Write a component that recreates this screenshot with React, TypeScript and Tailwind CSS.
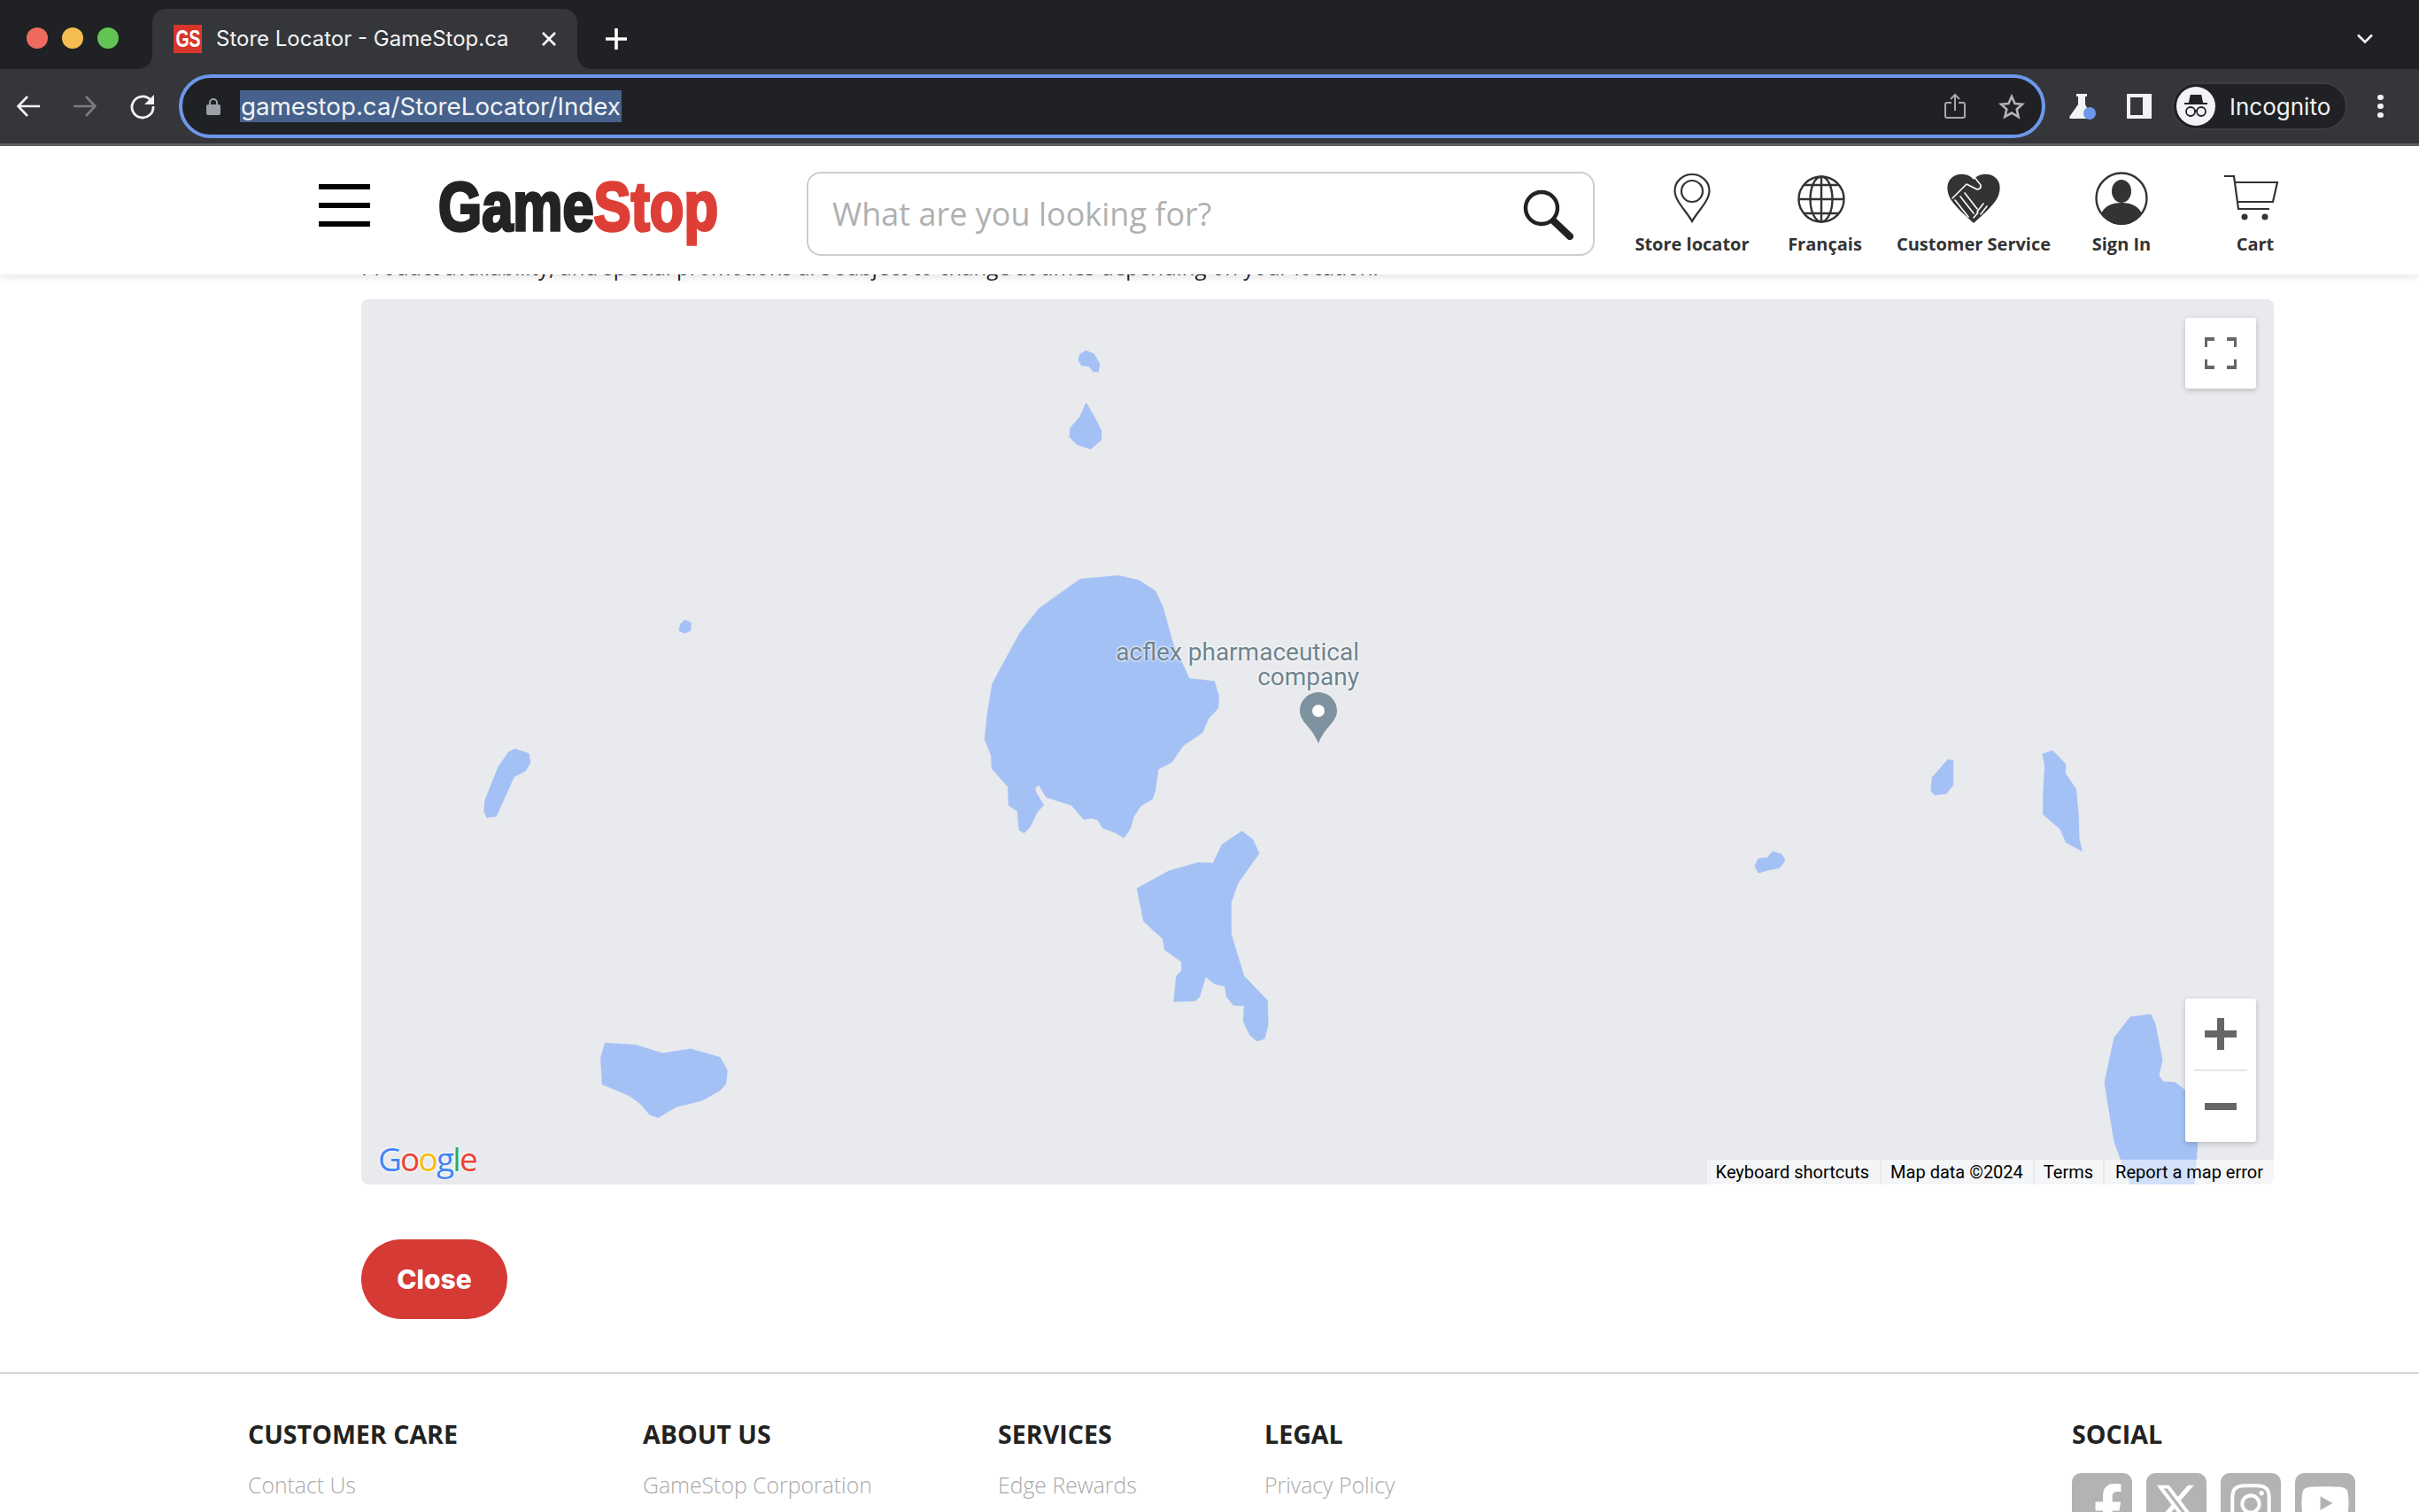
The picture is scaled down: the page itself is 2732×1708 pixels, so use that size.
import { FaFacebookF, FaInstagram, FaYoutube } from "react-icons/fa";
import { FaXTwitter } from "react-icons/fa6";

const WATER = "#a4c1f5";

// lake outlines, traced from the map, in px of the crop they were measured on
const lakeBig =
  "660,86 790,76 860,90 915,120 940,165 975,270 1030,370 1115,378 1130,420 1128,455 1095,485 1075,525 1010,562 970,610 925,630 915,690 905,715 865,735 842,765 830,800 808,826 780,812 735,797 720,775 700,770 672,773 630,733 545,710 520,675 508,682 510,695 537,732 515,752 490,795 470,812 452,803 447,750 417,733 415,680 360,628 358,590 336,545 345,470 362,385 455,240 520,170";
const lakeSouth =
  "852,970 960,920 1060,896 1110,898 1140,845 1208,806 1245,830 1267,870 1195,955 1172,1010 1172,1100 1215,1220 1295,1290 1297,1360 1285,1400 1260,1407 1235,1390 1212,1350 1215,1305 1180,1305 1155,1280 1150,1250 1115,1243 1085,1223 1065,1280 1050,1292 977,1294 985,1220 1003,1205 1003,1180 945,1145 940,1115 875,1065";
const lakeBottomLeft =
  "460,1297 565,1303 655,1328 750,1315 850,1340 875,1380 870,1420 850,1440 790,1470 700,1490 640,1522 610,1512 580,1480 540,1455 450,1422 445,1340";
const lakeLeft = "135,425 155,417 200,430 205,455 190,478 150,497 90,615 60,618 52,600 55,570 100,470";
const lakeDot = "730,27 752,35 750,60 730,68 710,60 715,40";
const lakeTop = "140,50 165,60 185,95 180,118 165,118 150,100 125,97 115,80 120,62";
const lakeDrop = "140,228 170,280 190,320 190,350 155,380 110,365 85,340 88,310 120,275";
const lakeMid = "690,68 708,72 708,155 685,185 645,190 632,175 636,130";
const lakeRight = "1010,50 1045,38 1090,85 1088,115 1125,170 1133,260 1135,335 1145,380 1090,350 1070,305 1012,255 1012,190 1018,90";
const lakeSmall = "2002,962 2012,965 2016,972 2010,980 1996,983 1986,986 1982,978 1986,970 1996,969";
const lakeCorner =
  "2429,1146 2434,1157 2442,1197 2438,1215 2443,1222 2457,1223 2468,1232 2482,1290 2478,1338 2406,1338 2388,1290 2377,1223 2388,1172 2406,1149";

function MapLakes() {
  return (
    <svg className="absolute inset-0" width="2160" height="1000" viewBox="408 338 2160 1000">
      <g fill={WATER} stroke={WATER} strokeLinejoin="round">
        <polygon points={lakeBig} transform="translate(1000 620) scale(0.3333 0.3954)" />
        <polygon points={lakeSouth} transform="translate(1000 620) scale(0.3333 0.3954)" />
        <polygon points={lakeBottomLeft} transform="translate(530 690) scale(0.3333 0.3763)" />
        <polygon points={lakeLeft} transform="translate(530 690) scale(0.3333 0.3763)" strokeWidth="6" />
        <polygon points={lakeDot} transform="translate(530 690) scale(0.3333 0.3763)" />
        <polygon points={lakeTop} transform="translate(1180 380) scale(0.3333)" strokeWidth="5" />
        <polygon points={lakeDrop} transform="translate(1180 380) scale(0.3333)" strokeWidth="5" />
        <polygon points={lakeMid} transform="translate(1970 835) scale(0.3333)" />
        <polygon points={lakeRight} transform="translate(1970 835) scale(0.3333)" />
        <polygon points={lakeSmall} />
        <polygon points={lakeCorner} />
      </g>
      {/* place pin */}
      <path d="M1489 782c-11.600 0-21 9.400-21 21 0 13 14 18 21 37 7-19 21-24 21-37 0-11.600-9.400-21-21-21z" fill="#7e929f" />
      <circle cx="1489" cy="803" r="7" fill="#fff" />
    </svg>
  );
}

function Flare({ side }: { side: "left" | "right" }) {
  return (
    <span className={side === "left" ? "absolute bottom-0 -left-4 h-4 w-4 bg-[#35363a]" : "absolute bottom-0 -right-4 h-4 w-4 bg-[#35363a]"}>
      <span className={side === "left" ? "block h-4 w-4 rounded-br-[16px] bg-[#202124]" : "block h-4 w-4 rounded-bl-[16px] bg-[#202124]"} />
    </span>
  );
}

function BrowserChrome() {
  return (
    <div className="font-['Inter',sans-serif]">
      <div className="flex h-[78px] items-end bg-[#202124] pl-[30px]">
        <div className="flex h-[68px] items-center gap-[16px] self-end pb-[2px]">
          <span className="h-[24px] w-[24px] rounded-full bg-[#ee6a5f]" />
          <span className="h-[24px] w-[24px] rounded-full bg-[#f5bd4f]" />
          <span className="h-[24px] w-[24px] rounded-full bg-[#61c454]" />
        </div>
        <div className="relative ml-[38px] flex h-[68px] w-[480px] items-center rounded-t-[16px] bg-[#35363a] pl-[24px]">
          <Flare side="left" />
          <Flare side="right" />
          <span className="flex h-[32px] w-[32px] items-center justify-center overflow-hidden bg-[#d9362b] font-['Liberation_Sans',sans-serif] text-[27px] leading-none font-bold text-white">
            <span className="scale-x-[0.72]">GS</span>
          </span>
          <span className="ml-[16px] text-[24px] whitespace-nowrap text-[#f1f3f4]">Store Locator - GameStop.ca</span>
          <svg className="absolute left-[439px] top-[25px]" width="18" height="18" viewBox="0 0 18 18" stroke="#fff" strokeWidth="2.600">
            <path d="M2 2l14 14M16 2L2 16" />
          </svg>
        </div>
        <svg className="mb-[21px] ml-[31px]" width="26" height="26" viewBox="0 0 26 26" stroke="#fff" strokeWidth="3.600">
          <path d="M13 1v24M1 13h24" />
        </svg>
        <svg className="mb-[28px] ml-[1952px]" width="20" height="12" viewBox="0 0 20 12" fill="none" stroke="#f1f3f4" strokeWidth="2.600">
          <path d="M2 1.500l8 8 8-8" />
        </svg>
      </div>
      <div className="flex h-[87px] items-center border-b-[3px] border-[#5f6064] bg-[#35363a]">
        <svg className="ml-[18px]" width="28" height="26" viewBox="0 0 28 26" fill="none" stroke="#f1f3f4" strokeWidth="2.600">
          <path d="M27 13H3M13 2L2.500 13 13 24" />
        </svg>
        <svg className="ml-[36px]" width="28" height="26" viewBox="0 0 28 26" fill="none" stroke="#7c7d80" strokeWidth="2.600">
          <path d="M1 13h24M15 2l10.500 11L15 24" />
        </svg>
        <svg className="ml-[36px]" width="30" height="30" viewBox="0 0 30 30" fill="none">
          <path d="M24 8A12 12 0 1 0 27 15" stroke="#f1f3f4" strokeWidth="2.800" />
          <path d="M28 2v11H17z" fill="#f1f3f4" />
        </svg>
        <div className="ml-[26px] flex h-[72px] w-[2108px] items-center rounded-[36px] border-[4px] border-[#6d97eb] bg-[#202124] pr-[19px]">
          <svg className="ml-[27px]" width="16" height="20" viewBox="0 0 16 20">
            <path d="M4 9V6a4 4 0 0 1 8 0v3" fill="none" stroke="#9aa0a6" strokeWidth="2" />
            <rect x="0" y="8" width="16" height="12" rx="2" fill="#9aa0a6" />
          </svg>
          <span className="ml-[22px] bg-[#46628c] px-px text-[27.700px] leading-[36px] whitespace-nowrap text-[#f1f3f4]">
            gamestop.ca/StoreLocator/Index
          </span>
          <svg className="ml-auto" width="24" height="30" viewBox="0 0 24 30" fill="none" stroke="#a6a8ab" strokeWidth="2">
            <path d="M8 11H3a2 2 0 0 0-2 2v13a2 2 0 0 0 2 2h18a2 2 0 0 0 2-2V13a2 2 0 0 0-2-2h-5M12 20V2M7 7l5-5 5 5" />
          </svg>
          <svg className="ml-[37px]" width="30" height="29" viewBox="0 0 30 29" fill="none" stroke="#b4b6b8" strokeWidth="2.600">
            <path d="M15 3l3.600 8 8.400.8-6.300 5.700 1.900 8.500L15 21.500 7.400 25.900l1.900-8.500L3 11.800l8.400-.8z" />
          </svg>
        </div>
        <svg className="ml-[27px]" width="30" height="30" viewBox="0 0 30 30">
          <path d="M8 1h12v3h-2v9l5 9a5 5 0 0 0-3 7H2c-2 0-2-1.500-1.500-2.500L10 13V4H8z" fill="#f1f3f4" />
          <circle cx="23" cy="23" r="7" fill="#6d97eb" />
        </svg>
        <svg className="ml-[35px]" width="28" height="28" viewBox="0 0 28 28">
          <path d="M0 0h28v28H0zM4 4v20h14V4z" fill="#f1f3f4" fillRule="evenodd" />
        </svg>
        <div className="ml-[23px] flex h-[54px] w-[198px] items-center rounded-[27px] border-[2px] border-[#3c3d41] bg-[#202124] pl-[3px]">
          <span className="flex h-[44px] w-[44px] items-center justify-center rounded-full bg-[#f1f3f4]">
            <svg width="30" height="30" viewBox="0 0 30 30" fill="none" stroke="#202124" strokeWidth="1.800">
              <path d="M8 10l1.500-7h11L22 10z" fill="#202124" />
              <path d="M2 12h26" strokeWidth="2" />
              <circle cx="9" cy="21" r="5" />
              <circle cx="21" cy="21" r="5" />
              <path d="M14 20h2" />
            </svg>
          </span>
          <span className="ml-[16px] text-[26px] whitespace-nowrap text-[#f1f3f4]">Incognito</span>
        </div>
        <div className="ml-[34px] flex flex-col gap-[3.500px]">
          <span className="h-[6.500px] w-[6.500px] rounded-full bg-[#f1f3f4]" />
          <span className="h-[6.500px] w-[6.500px] rounded-full bg-[#f1f3f4]" />
          <span className="h-[6.500px] w-[6.500px] rounded-full bg-[#f1f3f4]" />
        </div>
      </div>
    </div>
  );
}

function Logo() {
  return (
    <div className="ml-[77px] h-[67px] w-[318px] shrink-0 overflow-visible font-['Liberation_Sans',sans-serif] text-[78px] leading-[67px] font-bold whitespace-nowrap [-webkit-text-stroke:3.500px_currentColor]">
      <div className="w-fit origin-left scale-x-[0.81]">
        <span className="text-[#222423]">Game</span>
        <span className="text-[#dd3f36]">Stop</span>
      </div>
    </div>
  );
}

function NavItem({ label, width, icon }: { label: string; width: string; icon: React.ReactNode }) {
  return (
    <div className={`flex shrink-0 flex-col items-center ${width}`}>
      <div className="flex h-[60px] items-center justify-center">{icon}</div>
      <span className="mt-[7px] text-[20px] leading-[30px] font-bold whitespace-nowrap text-[#333]">{label}</span>
    </div>
  );
}

function Header() {
  return (
    <header className="relative z-10 flex h-[145px] items-start bg-white pl-[360px] font-['Open_Sans',sans-serif] shadow-[0_3px_10px_rgba(0,0,0,0.1)]">
      <div className="mt-[43px] flex w-[58px] shrink-0 flex-col gap-[15px]">
        <span className="h-[6px] bg-black" />
        <span className="h-[6px] bg-black" />
        <span className="h-[6px] bg-black" />
      </div>
      <div className="mt-[35px]">
        <Logo />
      </div>
      <div className="ml-[98px] mt-[29px] flex h-[95px] w-[890px] shrink-0 items-center justify-between rounded-[16px] border-[2.500px] border-[#cdcdcd] pl-[27px] pr-[22px]">
        <span className="text-[36px] text-[#b0b0b0]">What are you looking for?</span>
        <svg width="58" height="58" viewBox="0 0 58 58" fill="none" stroke="#222" strokeLinecap="round">
          <circle cx="22" cy="22" r="18" strokeWidth="4.500" />
          <path d="M36 37l18 17" strokeWidth="8" />
        </svg>
      </div>
      <nav className="ml-[35px] mt-[29px] flex">
        <NavItem
          label="Store locator"
          width="w-[150px]"
          icon={
            <svg width="42" height="56" viewBox="0 0 42 56" fill="none" stroke="#333" strokeWidth="2.200">
              <path d="M21 54C15 43 1.500 31 1.500 19.500a19.500 18.500 0 0 1 39 0C40.500 31 27 43 21 54z" />
              <circle cx="21" cy="20" r="12" />
            </svg>
          }
        />
        <NavItem
          label="Français"
          width="w-[150px]"
          icon={
            <svg className="mr-[8px] mt-[2px]" width="54" height="56" viewBox="0 0 54 56" fill="none" stroke="#333" strokeWidth="2.400">
              <circle cx="27" cy="28" r="25.500" />
              <ellipse cx="27" cy="28" rx="12.500" ry="25.500" />
              <path d="M27 2v52M2 28h50M8 12h38M8 44h38" />
            </svg>
          }
        />
        <NavItem
          label="Customer Service"
          width="w-[186px]"
          icon={
            <svg width="60" height="56" viewBox="0 0 60 56">
              <path d="M30 7C24-1 10-1 4 6c-6 7-4 18 2 26 6 8 15 16 24 24 9-8 18-16 24-24 6-8 8-19 2-26-6-7-20-7-26 1z" fill="#333" />
              <g fill="none" stroke="#fff" strokeWidth="1.600" strokeLinecap="round">
                <path d="M22 12L6 28M30 3l8 10c1 4-3 6-6 4l-10-5" />
                <path d="M9 30l15 19M15 26l15 19M20 22l14 18" />
                <path d="M34 43l7-9M38 46l7-9M30 50l5-6" />
              </g>
            </svg>
          }
        />
        <NavItem
          label="Sign In"
          width="w-[148px]"
          icon={
            <svg width="60" height="60" viewBox="0 0 60 60">
              <circle cx="30" cy="30" r="28.500" fill="#fff" stroke="#333" strokeWidth="2.400" />
              <ellipse cx="30" cy="22" rx="11" ry="13" fill="#333" />
              <path d="M7 48c3-9 12-13 23-13s20 4 23 13a28 28 0 0 1-46 0z" fill="#333" />
            </svg>
          }
        />
        <NavItem
          label="Cart"
          width="w-[154px]"
          icon={
            <svg className="mr-[8px]" width="62" height="54" viewBox="0 0 62 54" fill="none" stroke="#333" strokeWidth="2.200">
              <path d="M0 2h11l5 37h35" />
              <path d="M12 9h48l-5 22H15" />
              <circle cx="23" cy="48" r="3.500" fill="#333" stroke="none" />
              <circle cx="46" cy="48" r="3.500" fill="#333" stroke="none" />
            </svg>
          }
        />
      </nav>
    </header>
  );
}

function MapPanel() {
  return (
    <div className="relative mt-[18px] h-[1000px] w-[2160px] overflow-hidden rounded-[8px] bg-[#e8eaed]">
      <MapLakes />
      <div className="absolute right-[1033px] top-[385px] text-right font-['Roboto',sans-serif] text-[28px] leading-[28px] text-[#6f838f] [text-shadow:0_0_3px_#fff,0_0_3px_#fff]">
        <div className="whitespace-nowrap">acflex pharmaceutical</div>
        <div>company</div>
      </div>
      <div className="absolute right-[20px] top-[21px] flex h-[80px] w-[80px] items-center justify-center rounded-[3px] bg-white shadow-[0_2px_6px_rgba(0,0,0,0.2)]">
        <svg width="36" height="36" viewBox="0 0 36 36" fill="none" stroke="#666" strokeWidth="4">
          <path d="M1 11V2h10M25 2h10v9M35 25v9H25M11 34H1v-9" />
        </svg>
      </div>
      <div className="absolute right-[20px] top-[790px] flex h-[162px] w-[80px] flex-col items-center rounded-[3px] bg-white shadow-[0_2px_6px_rgba(0,0,0,0.2)]">
        <div className="flex h-[80px] items-center justify-center">
          <svg width="36" height="36" viewBox="0 0 36 36" fill="#666">
            <path d="M14 0h8v14h14v8H22v14h-8V22H0v-8h14z" />
          </svg>
        </div>
        <span className="h-[2px] w-[60px] bg-[#e6e6e6]" />
        <div className="flex h-[80px] items-center justify-center">
          <span className="h-[8px] w-[36px] bg-[#666]" />
        </div>
      </div>
      <div className="absolute bottom-[8px] left-[19px] font-['Open_Sans',sans-serif] text-[37px] leading-[42px] font-medium tracking-[-1.800px] [text-shadow:0_0_3px_#fff,0_0_3px_#fff]">
        <span className="text-[#4285f4]">G</span>
        <span className="text-[#ea4335]">o</span>
        <span className="text-[#fbbc05]">o</span>
        <span className="text-[#4285f4]">g</span>
        <span className="text-[#34a853]">l</span>
        <span className="text-[#ea4335]">e</span>
      </div>
      <div className="absolute right-0 bottom-0 flex h-[28px] font-['Roboto',sans-serif] text-[20px] leading-[28px] whitespace-nowrap text-black">
        <span className="bg-white/50 pl-[10px] pr-[12px]">Keyboard shortcuts</span>
        <span className="ml-[2px] bg-white/50 pl-[10px] pr-[11px]">Map data ©2024</span>
        <span className="ml-[2px] bg-white/50 pl-[10px] pr-[11px]">Terms</span>
        <span className="ml-[2px] bg-white/50 pl-[12px] pr-[12px]">Report a map error</span>
      </div>
    </div>
  );
}

function FooterColumn({ title, link }: { title: string; link: string }) {
  return (
    <div>
      <h4 className="text-[28.600px] leading-[38px] font-bold text-[#222]">{title}</h4>
      <p className="mt-[19px] text-[24.800px] leading-[38px] font-light text-[#a9a9a9]">{link}</p>
    </div>
  );
}

function SocialTile({ children }: { children: React.ReactNode }) {
  return <div className="flex h-[68px] w-[68px] items-start justify-center rounded-[10px] bg-[#b3b3b3] text-white">{children}</div>;
}

function Footer() {
  return (
    <footer className="mt-[60px] border-t-[2px] border-[#d4d4d4] pl-[280px] pt-[49px] font-['Open_Sans',sans-serif]">
      <div className="grid grid-cols-[446px_401px_301px_912px_auto]">
        <FooterColumn title="CUSTOMER CARE" link="Contact Us" />
        <FooterColumn title="ABOUT US" link="GameStop Corporation" />
        <FooterColumn title="SERVICES" link="Edge Rewards" />
        <FooterColumn title="LEGAL" link="Privacy Policy" />
        <div>
          <h4 className="text-[28.600px] leading-[38px] font-bold text-[#222]">SOCIAL</h4>
          <div className="mt-[25px] flex gap-[16px]">
            <SocialTile>
              <FaFacebookF className="ml-[14px] mt-[12px]" size={54} />
            </SocialTile>
            <SocialTile>
              <FaXTwitter className="mt-[9px]" size={50} />
            </SocialTile>
            <SocialTile>
              <FaInstagram className="mt-[9px]" size={52} />
            </SocialTile>
            <SocialTile>
              <FaYoutube className="mt-[6px]" size={56} />
            </SocialTile>
          </div>
        </div>
      </div>
    </footer>
  );
}

export default function App() {
  return (
    <div className="h-[1708px] w-[2732px] overflow-hidden bg-white">
      <BrowserChrome />
      <Header />
      <main className="-mt-[26px] pl-[408px] font-['Open_Sans',sans-serif]">
        <p className="text-[24px] leading-[36px] whitespace-nowrap text-[#222]">
          Product availability, and special promotions are subject to change at times depending on your location.
        </p>
        <MapPanel />
        <button className="mt-[62px] flex h-[90px] w-[165px] items-center justify-center rounded-[45px] bg-[#d63a35] font-['Inter',sans-serif] text-[30px] font-extrabold text-white">
          Close
        </button>
      </main>
      <Footer />
    </div>
  );
}
